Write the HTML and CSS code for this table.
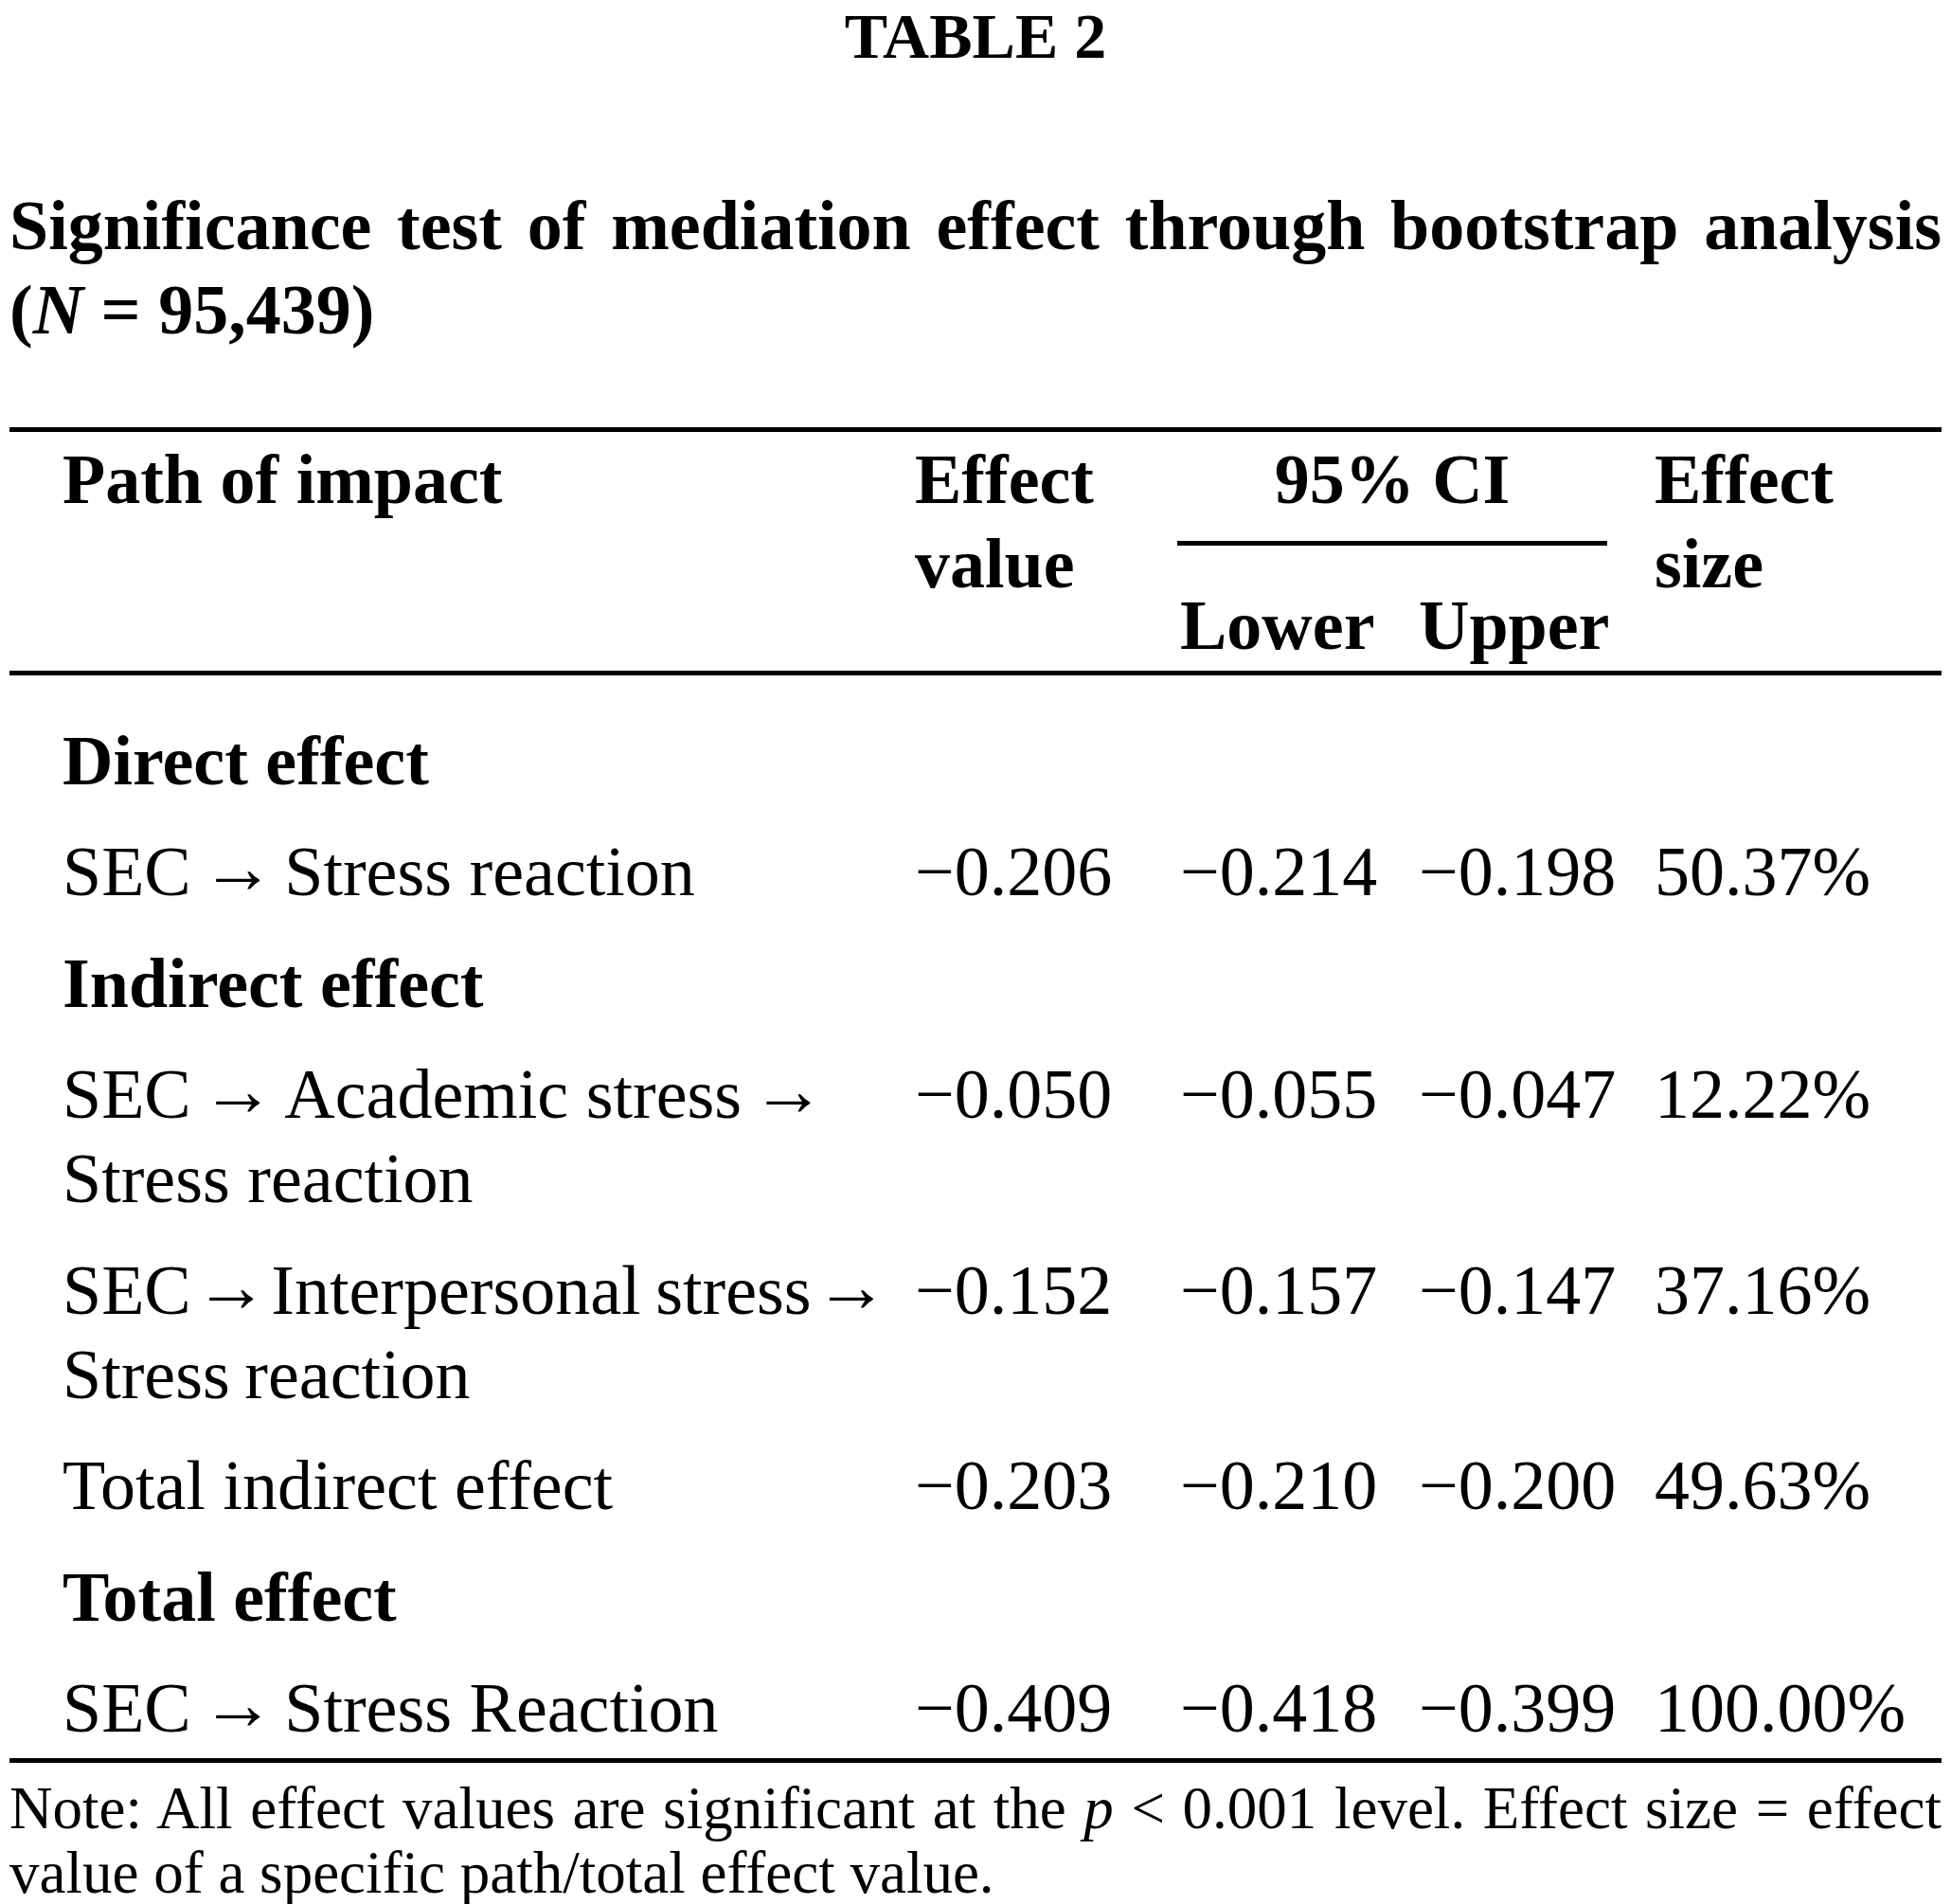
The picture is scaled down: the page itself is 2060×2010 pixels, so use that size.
FILE: index.html
```html
<!DOCTYPE html>
<html lang="en">
<head>
<meta charset="utf-8">
<title>Table 2</title>
<link rel="stylesheet" href="styles.css">
</head>
<body>
<div class="page">
  <div class="label">TABLE 2</div>
  <div class="title">
    <div class="title-line just">Significance test of mediation effect through bootstrap analysis</div>
    <div class="title-line">(<i>N</i> = 95,439)</div>
  </div>
  <div class="table">
    <div class="thead">
      <div class="h-path">Path of impact</div>
      <div class="h-value">Effect<br>value</div>
      <div class="h-ci"><div class="ci-label">95% CI</div></div>
      <div class="h-lower">Lower</div>
      <div class="h-upper">Upper</div>
      <div class="h-size">Effect<br>size</div>
    </div>
    <div class="tbody">
      <div class="c section">Direct effect</div>

      <div class="c first">SEC<span class="arr"> → </span>Stress reaction</div>
      <div class="c">−0.206</div>
      <div class="c">−0.214</div>
      <div class="c">−0.198</div>
      <div class="c">50.37%</div>

      <div class="c section">Indirect effect</div>

      <div class="c first">SEC<span class="arr"> → </span>Academic stress<span class="arr"> →</span><br>Stress reaction</div>
      <div class="c">−0.050</div>
      <div class="c">−0.055</div>
      <div class="c">−0.047</div>
      <div class="c">12.22%</div>

      <div class="c first tight">SEC<span class="arr"> → </span>Interpersonal stress<span class="arr"> →</span><br>Stress reaction</div>
      <div class="c">−0.152</div>
      <div class="c">−0.157</div>
      <div class="c">−0.147</div>
      <div class="c">37.16%</div>

      <div class="c first">Total indirect effect</div>
      <div class="c">−0.203</div>
      <div class="c">−0.210</div>
      <div class="c">−0.200</div>
      <div class="c">49.63%</div>

      <div class="c section">Total effect</div>

      <div class="c first">SEC<span class="arr"> → </span>Stress Reaction</div>
      <div class="c">−0.409</div>
      <div class="c">−0.418</div>
      <div class="c">−0.399</div>
      <div class="c">100.00%</div>
    </div>
  </div>
  <div class="note">
    <div class="note-line just">Note: All effect values are significant at the <i>p</i> &lt; 0.001 level. Effect size = effect</div>
    <div class="note-line">value of a specific path/total effect value.</div>
  </div>
</div>
</body>
</html>
```

FILE: styles.css
```css
html, body {
  margin: 0;
  padding: 0;
  background: #ffffff;
}

body {
  font-family: "Liberation Serif", "Times New Roman", serif;
  color: #000000;
}

.page {
  padding: 0 10px;
  width: 2040px;
}

.label {
  font-size: 68px;
  font-weight: bold;
  line-height: 70px;
  padding-top: 3px;
  text-align: center;
}

.title {
  margin-top: 120.5px;
  font-size: 74px;
  font-weight: bold;
  line-height: 89px;
}

.title-line {
  white-space: nowrap;
}

.just {
  text-align: justify;
  text-align-last: justify;
}

.table {
  margin-top: 79.5px;
  font-size: 74px;
}

.thead,
.tbody {
  display: grid;
  grid-template-columns: 956px 280px 252px 249px 1fr;
}

.thead {
  grid-template-rows: auto auto;
  border-top: 5px solid #000;
  border-bottom: 5px solid #000;
  padding: 5.5px 0 3.5px;
  line-height: 89px;
  font-weight: bold;
}

.h-path {
  grid-column: 1;
  grid-row: 1;
  padding-left: 56px;
}

.h-value {
  grid-column: 2;
  grid-row: 1 / 3;
}

.h-ci {
  grid-column: 3 / 5;
  grid-row: 1;
}

.ci-label {
  width: 454px;
  margin-left: -3px;
  text-align: center;
  padding-bottom: 20.5px;
  border-bottom: 5px solid #000;
}

.h-lower {
  grid-column: 3;
  grid-row: 2;
  padding-top: 39.5px;
}

.h-upper {
  grid-column: 4;
  grid-row: 2;
  padding-top: 39.5px;
}

.h-size {
  grid-column: 5;
  grid-row: 1 / 3;
}

.tbody {
  padding-top: 24.5px;
  border-bottom: 5px solid #000;
}

.c {
  padding: 21px 0 7.5px;
  line-height: 89px;
  white-space: nowrap;
}

.section {
  grid-column: 1 / -1;
  padding-left: 56px;
  font-weight: bold;
}

.first {
  padding-left: 56px;
}

.tight {
  word-spacing: -3px;
}

.arr {
  font-size: 1.05em;
  line-height: 0;
  vertical-align: 3px;
  word-spacing: -9px;
}

.tight .arr {
  word-spacing: -16px;
}

.note {
  margin-top: 14.7px;
  font-size: 63px;
  line-height: 68px;
}

.note-line {
  white-space: nowrap;
}
```
